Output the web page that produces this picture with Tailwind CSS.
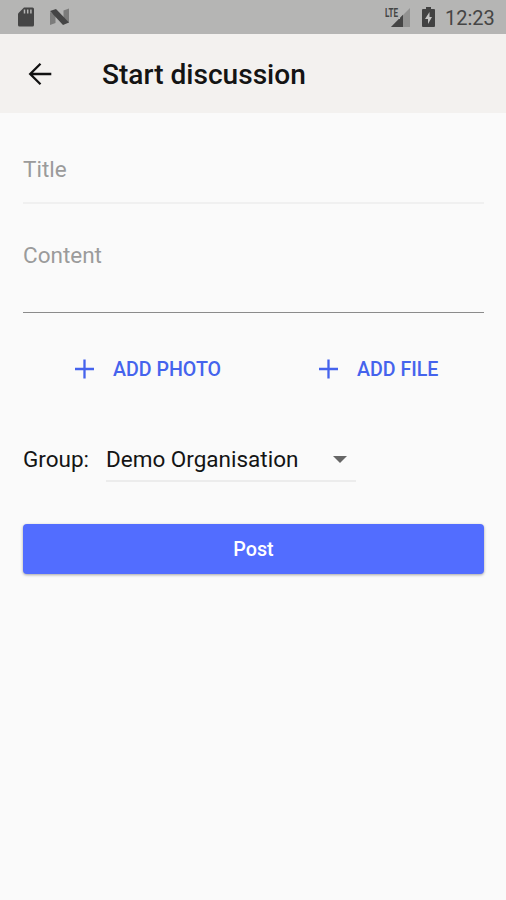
<!DOCTYPE html>
<html lang="en">
<head>
<meta charset="utf-8">
<title>Start discussion</title>
<script src="https://cdn.jsdelivr.net/npm/@tailwindcss/browser@4"></script>
</head>
<body class="bg-[#fafafa]">
<div class="w-[506px] h-[900px] overflow-hidden flex flex-col bg-[#fafafa] font-[Roboto,sans-serif] text-[#141414] whitespace-nowrap">
  <div class="h-[34px] shrink-0 bg-[#b5b5b4] flex items-center pl-[18px] pr-[11px] text-[#454545]">
    <svg class="w-4 h-5" viewBox="0 0 16 20"><path fill="#454545" d="M6 0.5H14.5Q16 0.5 16 2V18Q16 19.5 14.5 19.5H1.5Q0 19.5 0 18V6.5Z"/><path stroke="#b5b5b4" stroke-width="1.5" d="M6.500 2.500V6.500M9.700 2.500V6.500M12.900 2.500V6.500"/></svg>
    <svg class="w-[21px] h-[18px] ml-[15px]" viewBox="0 0 21 18"><path fill="#7c7c7b" d="M1 4L6.500 7V15L1 17ZM14.500 2.500L20 .5V15L14.500 11Z"/><path fill="#454545" d="M1 3L7 1L20 14.500L14 17Z"/></svg>
    <div class="ml-auto flex items-center">
      <svg class="w-[26px] h-[22px]" viewBox="0 0 26 22"><path fill="#929291" d="M25 2V21H6Z"/><path fill="#454545" d="M18 8.700V21H6Z"/><path fill="none" stroke="#b5b5b4" stroke-width="2" d="M0 12H14V0"/><text x="0" y="10.500" textLength="13" lengthAdjust="spacingAndGlyphs" font-family="Roboto" font-weight="700" font-size="12" fill="#454545">LTE</text></svg>
      <svg class="w-[13px] h-[20px] ml-[11px]" viewBox="0 0 13 20"><path fill="#424242" d="M4 0H9V2H12Q13 2 13 3V19Q13 20 12 20H1Q0 20 0 19V3Q0 2 1 2H4Z"/><path fill="#c4c4c3" d="M7.500 5L3 12H6V17L10 10H7.500Z"/></svg>
      <span class="ml-[10px] text-[20px] leading-[24px] w-[50px] mt-[2px]">12:23</span>
    </div>
  </div>
  <header class="h-[79px] shrink-0 bg-[#f3f1ef] flex items-center pl-[28px]">
    <svg class="w-6 h-6" viewBox="0 0 24 24" fill="none" stroke="#111" stroke-width="2.300"><path d="M23.300 12H2.500M12.500 1.700L2.200 12L12.500 22.300"/></svg>
    <h1 class="ml-[50px] mt-[2px] text-[28.100px] leading-8 font-medium">Start discussion</h1>
  </header>
  <main class="pl-[23px] pr-[22px] flex flex-col">
    <div class="h-[91px] pt-[41px] border-b-2 border-[#f0f0f0] text-[22.500px] leading-[30px] text-[#9b9b9b]">Title</div>
    <div class="h-[109px] pt-[36px] border-b border-[#8b8b8b] text-[22.500px] leading-[30px] text-[#9b9b9b]">Content</div>
    <div class="flex h-[112px] text-[#4563ed] text-[19.600px] font-medium leading-6">
      <div class="w-[244px] pl-[51px] pt-[45px] flex items-start">
        <svg class="w-5 h-5 mt-[1px]" viewBox="0 0 20 20" fill="none" stroke="#4563ed" stroke-width="2.300"><path d="M10.500 .5V19.500M1 10H20"/></svg><span class="ml-[19px]">ADD PHOTO</span>
      </div>
      <div class="pl-[51px] pt-[45px] flex items-start">
        <svg class="w-5 h-5 mt-[1px]" viewBox="0 0 20 20" fill="none" stroke="#4563ed" stroke-width="2.300"><path d="M10.500 .5V19.500M1 10H20"/></svg><span class="ml-[19px]">ADD FILE</span>
      </div>
    </div>
    <div class="flex h-[57px] text-[22.500px] leading-[30px]">
      <span class="w-[83px] pt-[19px]">Group:</span>
      <div class="w-[250px] pt-[19px] border-b-2 border-[#ececec] flex items-start justify-between pr-[9px]">
        <span>Demo Organisation</span>
        <svg class="w-[14px] h-[7px] mt-[12px]" viewBox="0 0 14 7"><path fill="#666" d="M0 0H14L7 7Z"/></svg>
      </div>
    </div>
    <button class="mt-[42px] h-[50px] pt-[2px] rounded-[4px] bg-[#526dff] text-white text-[19.700px] font-medium leading-6 shadow-[0_1px_3px_rgba(0,0,0,0.35)]">Post</button>
  </main>
</div>
</body>
</html>
